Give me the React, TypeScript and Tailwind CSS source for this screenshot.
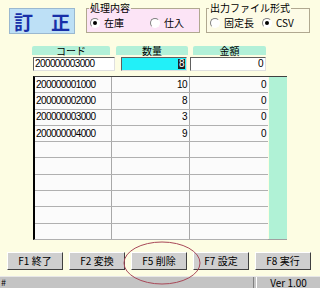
import React from "react";

const font = { fontFamily: '"MS UI Gothic", "Noto Sans CJK JP", "Liberation Sans", sans-serif' };
const digits = "font-['Liberation_Sans',sans-serif] text-[10px] tracking-[-0.6px]";

const rows = [
  { code: "200000001000", qty: "10", amount: "0" },
  { code: "200000002000", qty: "8", amount: "0" },
  { code: "200000003000", qty: "3", amount: "0" },
  { code: "200000004000", qty: "9", amount: "0" },
  { code: "", qty: "", amount: "" },
  { code: "", qty: "", amount: "" },
  { code: "", qty: "", amount: "" },
  { code: "", qty: "", amount: "" },
  { code: "", qty: "", amount: "" },
  { code: "", qty: "", amount: "" },
];

const buttons = ["F1 終了", "F2 変換", "F5 削除", "F7 設定", "F8 実行"];

function Radio({ checked, label }: { checked?: boolean; label: string }) {
  return (
    <span className="flex h-[10px] items-center gap-[4px]">
      <span className="flex h-[10px] w-[10px] items-center justify-center rounded-full border border-t-[#808080] border-l-[#808080] border-b-white border-r-white bg-white">
        {checked && <span className="h-[4px] w-[4px] rounded-full bg-black" />}
      </span>
      <span className="leading-[10px]">{label}</span>
    </span>
  );
}

const sunken = "border border-t-[#606060] border-l-[#606060] border-b-[#e0e0e0] border-r-[#e0e0e0]";

export default function App() {
  return (
    <div className="relative flex h-[288px] w-[320px] flex-col overflow-hidden bg-[#fdfde3] text-[10px] leading-none text-black" style={font}>
      <div className="flex h-[40px] items-start pt-[3px]">
        <div className="ml-[9px] mt-[5px] flex h-[26px] w-[66px] items-center justify-between border border-[#9ab8d0] bg-[#bde0f6] px-[4px] text-[19px] font-bold text-[#1830a8]">
          <span>訂</span>
          <span>正</span>
        </div>
        <fieldset className="ml-[11px] box-border h-[30px] w-[114px] border border-[#b0a890] bg-[#fce4f6] px-[2px]">
          <legend className="px-[1px] text-[10px] leading-[10px]">処理内容</legend>
          <div className="mt-[5px] flex gap-[26px] pl-[1px]">
            <Radio checked label="在庫" />
            <Radio label="仕入" />
          </div>
        </fieldset>
        <fieldset className="ml-[6px] box-border h-[30px] w-[104px] border border-[#b0a890] bg-[#fdfbe6] px-[2px]">
          <legend className="px-[1px] text-[10px] leading-[10px]">出力ファイル形式</legend>
          <div className="mt-[5px] flex gap-[8px] pl-[1px]">
            <Radio label="固定長" />
            <Radio checked label={"CSV"} />
          </div>
        </fieldset>
      </div>

      <div className="mt-[6px] flex h-[9px] text-[10px]">
        <div className="ml-[32px] flex w-[78px] items-center justify-center rounded-t-[2px] bg-[#b2f0d8]">コード</div>
        <div className="ml-[6px] flex w-[72px] items-center justify-center rounded-t-[2px] bg-[#b2f0d8]">数量</div>
        <div className="ml-[5px] flex w-[73px] items-center justify-center rounded-t-[2px] bg-[#b2f0d8]">金額</div>
      </div>

      <div className={`mt-[2px] flex h-[14px] ${digits}`}>
        <div className={`ml-[33px] flex w-[82px] items-center bg-white pl-[1px] ${sunken}`}>200000003000</div>
        <div className={`ml-[6px] flex w-[66px] items-center justify-end bg-[#22f0f8] pr-[1px] ${sunken}`}>
          <span className="bg-[#202020] px-[1px] text-white">8</span>
        </div>
        <div className={`ml-[3px] flex w-[76px] items-center justify-end bg-white pr-[2px] ${sunken}`}>0</div>
      </div>

      <div className={`ml-[33px] mt-[5px] flex h-[164px] w-[254px] border-l-2 border-t border-b border-l-black border-t-[#404040] border-b-[#a0a0a0] ${digits}`}>
        <div className="flex w-[233px] flex-col bg-[#fbfbfb]">
          {rows.map((r, i) => (
            <div key={i} className="flex h-[16.3px] shrink-0 border-b border-[#b0b0b0]">
              <div className="flex w-[77px] items-center border-r border-[#a8a8a8] pl-[1px]">{r.code}</div>
              <div className="flex w-[78px] items-center justify-end border-r border-[#a8a8a8] pr-[2px]">{r.qty}</div>
              <div className="flex w-[78px] items-center justify-end pr-[2px]">{r.amount}</div>
            </div>
          ))}
        </div>
        <div className="ml-[1px] w-[18px] bg-[#b0f2d6]" />
      </div>

      <div className="mt-[12px] flex h-[18px] gap-[6px] pl-[7px]">
        {buttons.map((b) => (
          <div key={b} className="flex w-[56px] items-center justify-center border border-t-white border-l-white border-b-[#404040] border-r-[#404040] bg-[#cfcfcf] text-[10px]">
            {b}
          </div>
        ))}
      </div>

      <div className="mt-auto flex h-[12px] border-t border-[#e8e8e8] bg-[#c4c4c4] text-[10px]">
        <div className="flex flex-1 items-center border-r border-[#808080] pl-[1px] text-[9px]">#</div>
        <div className="ml-[2px] flex w-[64px] items-center justify-center border-l border-white">Ver 1.00</div>
      </div>

      <svg className="absolute left-[122px] top-[240px]" width="80" height="46" viewBox="0 0 80 46">
        <ellipse cx="40" cy="23" rx="38" ry="21" fill="none" stroke="#a84858" strokeWidth="1" />
      </svg>
    </div>
  );
}
